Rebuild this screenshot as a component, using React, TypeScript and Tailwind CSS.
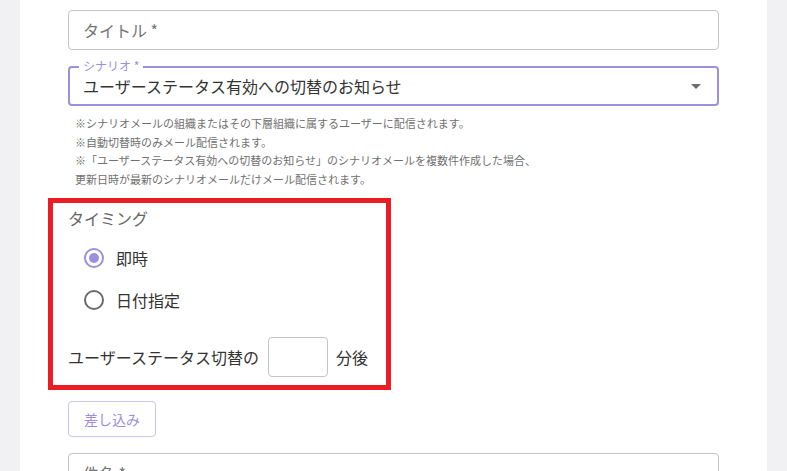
import React from "react"

const purple = "#9d8fdd"

function Radio({ checked, label }: { checked?: boolean; label: string }) {
  return (
    <div className="flex items-center h-[42px] pl-[14px]">
      <svg width="24" height="24" viewBox="0 0 24 24" className="shrink-0">
        <circle
          cx="12"
          cy="12"
          r="9"
          fill="none"
          stroke={checked ? purple : "#6b6b6b"}
          strokeWidth="2"
        />
        {checked && <circle cx="12" cy="12" r="5" fill={purple} />}
      </svg>
      <span className="ml-[10px] text-[16px] text-[#333]">{label}</span>
    </div>
  )
}

export default function App() {
  return (
    <div
      className="w-[787px] h-[471px] bg-[#f1f1f3] flex overflow-hidden"
      style={{ fontFamily: '"Noto Sans CJK JP", "Noto Sans", sans-serif' }}
    >
      <div className="ml-[20px] w-[747px] bg-white px-[48px] pt-[10px] flex flex-col">
        {/* title */}
        <div className="shrink-0 h-[40px] border border-[#c4c4c4] rounded-[4px] flex items-center pl-[14px] text-[16px] text-[#757575]">
          タイトル *
        </div>

        {/* scenario select */}
        <div className="shrink-0 relative mt-[16px] h-[40px] border-2 border-[#9d8fdd] rounded-[4px] flex items-center pl-[13px] pr-[12px]">
          <span className="absolute -top-[9px] left-[9px] bg-white px-[4px] text-[12px] leading-[14px] text-[#9d8fdd]">
            シナリオ *
          </span>
          <span className="flex-1 text-[16px] text-[#333]">
            ユーザーステータス有効への切替のお知らせ
          </span>
          <svg width="10" height="5" viewBox="0 0 10 5" className="mr-[4px]">
            <path d="M0 0 L10 0 L5 5 Z" fill="#6b6b6b" />
          </svg>
        </div>

        {/* helper */}
        <div className="shrink-0 mt-[8px] pl-[7px] text-[11px] leading-[18.5px] text-[#707070]">
          <p>※シナリオメールの組織またはその下層組織に属するユーザーに配信されます。</p>
          <p>※自動切替時のみメール配信されます。</p>
          <p>
            ※「ユーザーステータス有効への切替のお知らせ」のシナリオメールを複数件作成した場合、
          </p>
          <p>更新日時が最新のシナリオメールだけメール配信されます。</p>
        </div>

        {/* timing (highlighted) */}
        <div className="shrink-0 -ml-[20px] mt-[10px] w-[343px] h-[192px] border-[5px] border-[#ec1c24] pl-[15px] pt-[4px] flex flex-col">
          <div className="text-[16px] leading-[22px] text-[#666]">タイミング</div>
          <div className="mt-[8px]">
            <Radio checked label="即時" />
            <Radio label="日付指定" />
          </div>
          <div className="mt-[16px] flex items-center">
            <span className="text-[16px] text-[#333]">ユーザーステータス切替の</span>
            <div className="ml-[9px] w-[60px] h-[40px] border border-[#c4c4c4] rounded-[4px]" />
            <span className="ml-[8px] text-[16px] text-[#333]">分後</span>
          </div>
        </div>

        {/* insert button */}
        <button className="shrink-0 mt-[11px] w-[88px] h-[36px] border border-[#cdc5f0] rounded-[4px] text-[14px] text-[#9d8fdd] self-start">
          差し込み
        </button>

        {/* subject */}
        <div className="shrink-0 mt-[16px] h-[40px] border border-[#c4c4c4] rounded-[4px] flex items-center pl-[14px] text-[16px] text-[#757575]">
          件名 *
        </div>
      </div>
    </div>
  )
}
